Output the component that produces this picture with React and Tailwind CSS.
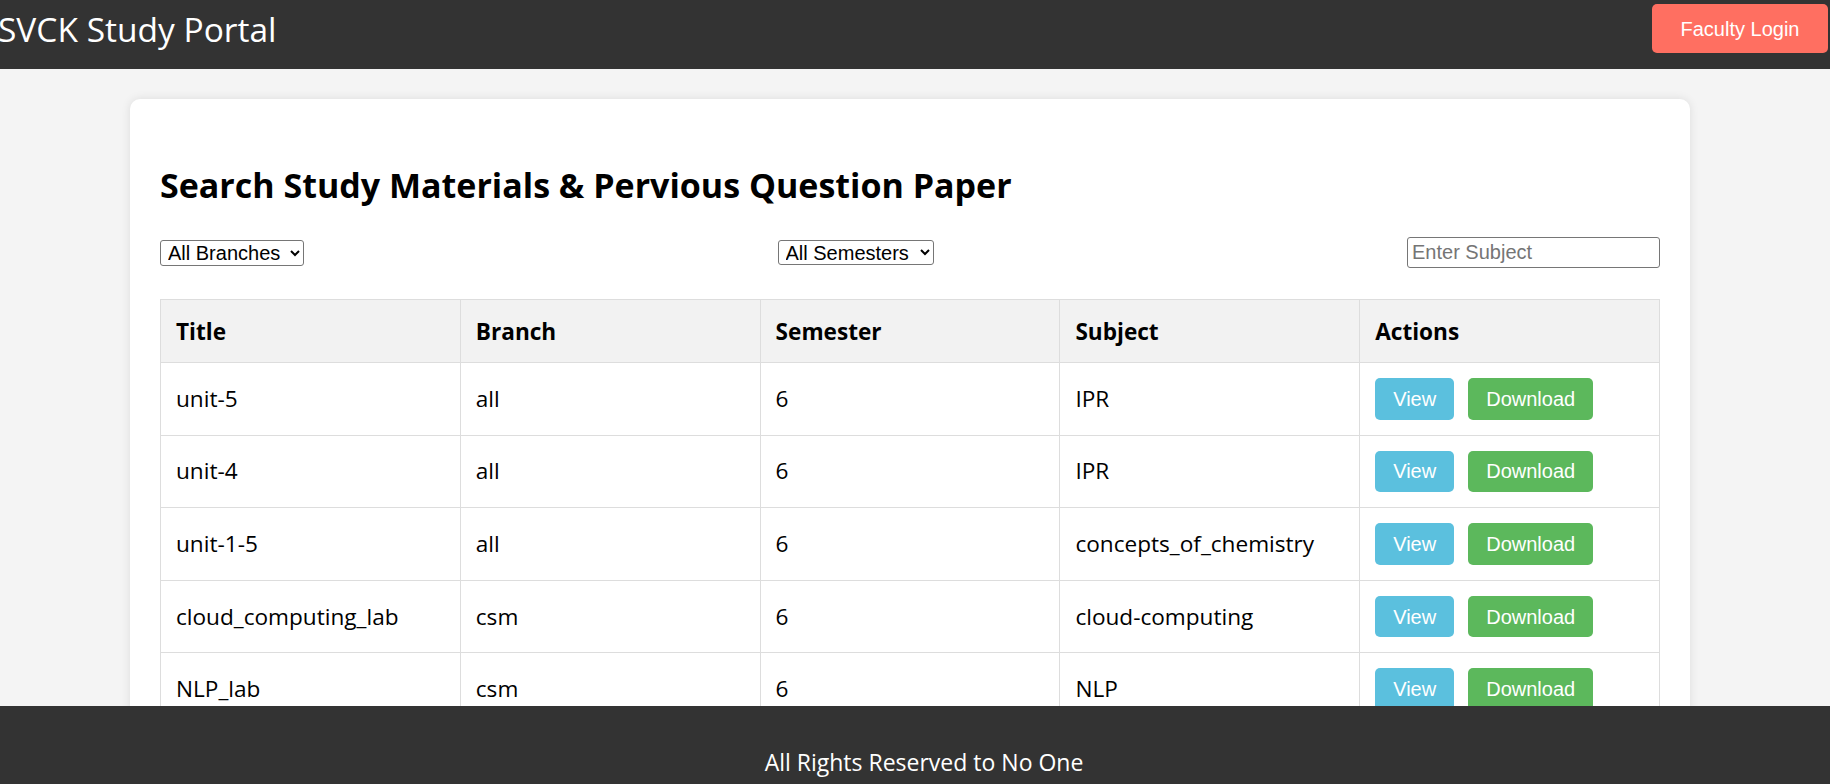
import React, { useState } from 'react';

const materials = [
    { title: 'unit-5', branch: 'all', semester: '6', subject: 'IPR' },
    { title: 'unit-4', branch: 'all', semester: '6', subject: 'IPR' },
    { title: 'unit-1-5', branch: 'all', semester: '6', subject: 'concepts_of_chemistry' },
    { title: 'cloud_computing_lab', branch: 'csm', semester: '6', subject: 'cloud-computing' },
    { title: 'NLP_lab', branch: 'csm', semester: '6', subject: 'NLP' },
    { title: 'NLP_unit-3', branch: 'csm', semester: '6', subject: 'NLP' },
];

const segoe = "font-['Open_Sans',sans-serif]";

export default function App() {
    const [branch, setBranch] = useState('');
    const [semester, setSemester] = useState('');
    const [subject, setSubject] = useState('');

    return (
        <div className={`h-screen flex flex-col overflow-hidden bg-[#f4f4f4] ${segoe}`}>
            {/* Header */}
            <header className="h-[69px] shrink-0 bg-[#333] flex items-start justify-between">
                <h1 className="-ml-[2px] mt-[13px] text-[33.5px] leading-none font-normal text-white whitespace-nowrap">
                    SVCK Study Portal
                </h1>
                <button className="mt-[4px] mr-[2px] w-[176px] h-[49px] rounded-[5px] bg-[#ff6f61] text-white text-[20px] font-['Liberation_Sans',Arial,sans-serif]">
                    Faculty Login
                </button>
            </header>

            {/* Main */}
            <main className="flex-1 overflow-hidden pt-[30px]">
                <div className="ml-[130px] w-[1560px] bg-white rounded-[10px] shadow-[0_0_10px_rgba(0,0,0,0.1)] px-[30px] pt-[30px] pb-[30px]">
                    <h2 className="mt-[39px] text-[34px] leading-none font-bold text-black">
                        Search Study Materials &amp; Pervious Question Paper
                    </h2>

                    <div className="mt-[35px] h-[31px] flex items-center justify-between font-['Liberation_Sans',Arial,sans-serif] text-[20px] text-black">
                        <select
                            value={branch}
                            onChange={(e) => setBranch(e.target.value)}
                            className="h-[26px] w-[144px] border border-[#767676] rounded-[3px] bg-white pl-[3px]"
                        >
                            <option value="">All Branches</option>
                            <option value="csm">csm</option>
                            <option value="cse">cse</option>
                        </select>
                        <select
                            value={semester}
                            onChange={(e) => setSemester(e.target.value)}
                            className="h-[25px] w-[156px] border border-[#767676] rounded-[3px] bg-white pl-[3px]"
                        >
                            <option value="">All Semesters</option>
                            <option value="6">6</option>
                        </select>
                        <input
                            value={subject}
                            onChange={(e) => setSubject(e.target.value)}
                            placeholder="Enter Subject"
                            className="h-[31px] w-[253px] border border-[#767676] rounded-[3px] px-[4px] placeholder:text-[#757575] outline-none"
                        />
                    </div>

                    <table className="mt-[31px] w-full border-collapse table-fixed text-[22.6px] text-black">
                        <thead>
                            <tr className="bg-[#f2f2f2]">
                                {['Title', 'Branch', 'Semester', 'Subject', 'Actions'].map((h) => (
                                    <th key={h} className="h-[63px] px-[15px] pt-[2px] border border-[#ddd] text-left font-bold align-middle">
                                        {h}
                                    </th>
                                ))}
                            </tr>
                        </thead>
                        <tbody>
                            {materials.map((m) => (
                                <tr key={m.title}>
                                    <td className="px-[15px] py-[15px] border border-[#ddd] align-middle">{m.title}</td>
                                    <td className="px-[15px] py-[15px] border border-[#ddd] align-middle">{m.branch}</td>
                                    <td className="px-[15px] py-[15px] border border-[#ddd] align-middle">{m.semester}</td>
                                    <td className="px-[15px] py-[15px] border border-[#ddd] align-middle">{m.subject}</td>
                                    <td className="px-[15px] py-[15px] border border-[#ddd] align-middle">
                                        <div className="flex gap-[14px] font-['Liberation_Sans',Arial,sans-serif] text-[20px] text-white">
                                            <button className="h-[41.6px] px-[18px] rounded-[5px] bg-[#5bc0de]">View</button>
                                            <button className="h-[41.6px] px-[18px] rounded-[5px] bg-[#5cb85c]">Download</button>
                                        </div>
                                    </td>
                                </tr>
                            ))}
                        </tbody>
                    </table>
                </div>
            </main>

            {/* Footer */}
            <footer className="h-[78px] shrink-0 bg-[#333] text-white text-center pt-[45px] pl-[18px]">
                <p className="text-[23px] leading-none">All Rights Reserved to No One</p>
            </footer>
        </div>
    );
}
